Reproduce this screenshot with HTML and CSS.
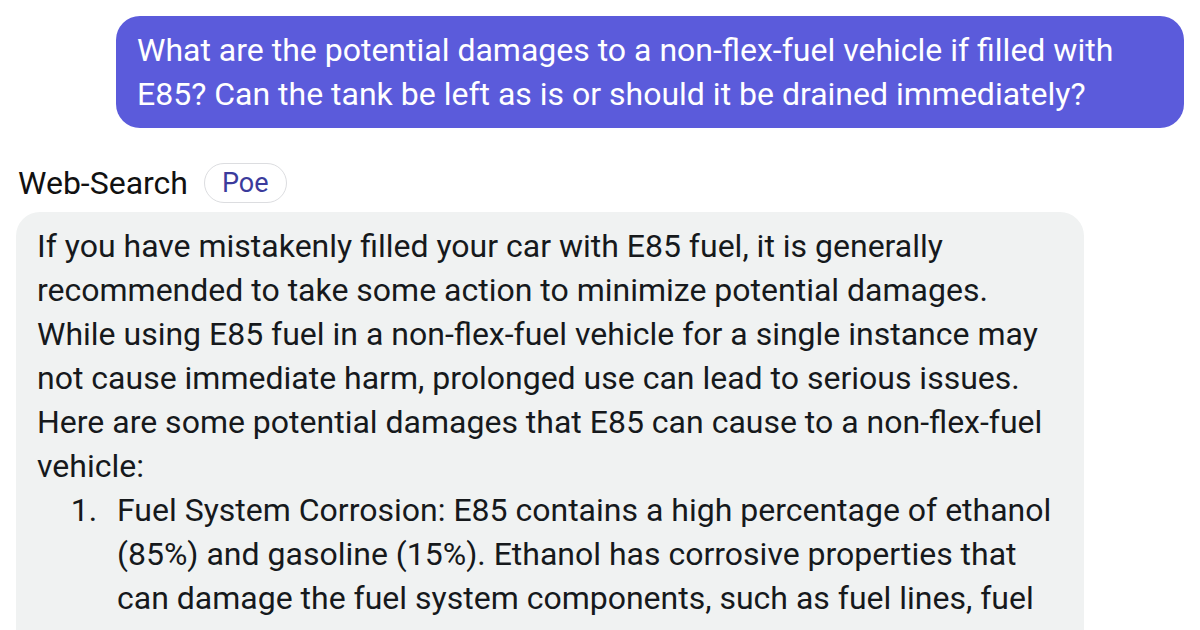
FILE: index.html
```html
<!DOCTYPE html>
<html>
<head>
<meta charset="utf-8">
<link rel="stylesheet" href="styles.css">
</head>
<body>
<div class="chat">
  <div class="user-row">
    <div class="user-bubble">What are the potential damages to a non-flex-fuel vehicle if filled with E85? Can the tank be left as is or should it be drained immediately?</div>
  </div>
  <div class="bot-header">
    <span class="bot-name">Web-Search</span>
    <span class="bot-tag">Poe</span>
  </div>
  <div class="bot-bubble">
    <p>If you have mistakenly filled your car with E85 fuel, it is generally recommended to take some action to minimize potential damages. While using E85 fuel in a non-flex-fuel vehicle for a single instance may not cause immediate harm, prolonged use can lead to serious issues. Here are some potential damages that E85 can cause to a non-flex-fuel vehicle:</p>
    <ol>
      <li>Fuel System Corrosion: E85 contains a high percentage of ethanol (85%) and gasoline (15%). Ethanol has corrosive properties that can damage the fuel system components, such as fuel lines, fuel injectors, and seals, which are not designed to handle high ethanol blends.</li>
    </ol>
  </div>
</div>
</body>
</html>
```

FILE: styles.css
```css
html, body {
  margin: 0;
  padding: 0;
  background: #ffffff;
  overflow: hidden;
}
body {
  font-family: Roboto, "Noto Sans", sans-serif;
  font-size: 32px;
  line-height: 44px;
  color: #16191c;
}
.chat {
  padding: 16px 16px 0 16px;
  display: flex;
  flex-direction: column;
}
.user-row {
  display: flex;
  justify-content: flex-end;
}
.user-bubble {
  width: 1068px;
  box-sizing: border-box;
  background: #5b5bdb;
  color: #ffffff;
  border-radius: 24px;
  padding: 12px 21px;
}
.bot-header {
  display: flex;
  align-items: center;
  gap: 16px;
  margin-top: 35px;
  padding-left: 2px;
  height: 40px;
}
.bot-name {
  color: #111111;
}
.bot-tag {
  display: inline-flex;
  align-items: center;
  height: 38px;
  padding: 0 17px;
  border: 1px solid #dcdde0;
  border-radius: 20px;
  color: #3b3b9c;
  font-size: 27px;
}
.bot-bubble {
  margin-top: 9px;
  width: 1068px;
  box-sizing: border-box;
  background: #f0f2f2;
  border-radius: 24px;
  padding: 12px 21px;
}
.bot-bubble p {
  margin: 0;
}
.bot-bubble ol {
  margin: 0;
  padding-left: 68px;
}
.bot-bubble li {
  padding-left: 12px;
}
```
